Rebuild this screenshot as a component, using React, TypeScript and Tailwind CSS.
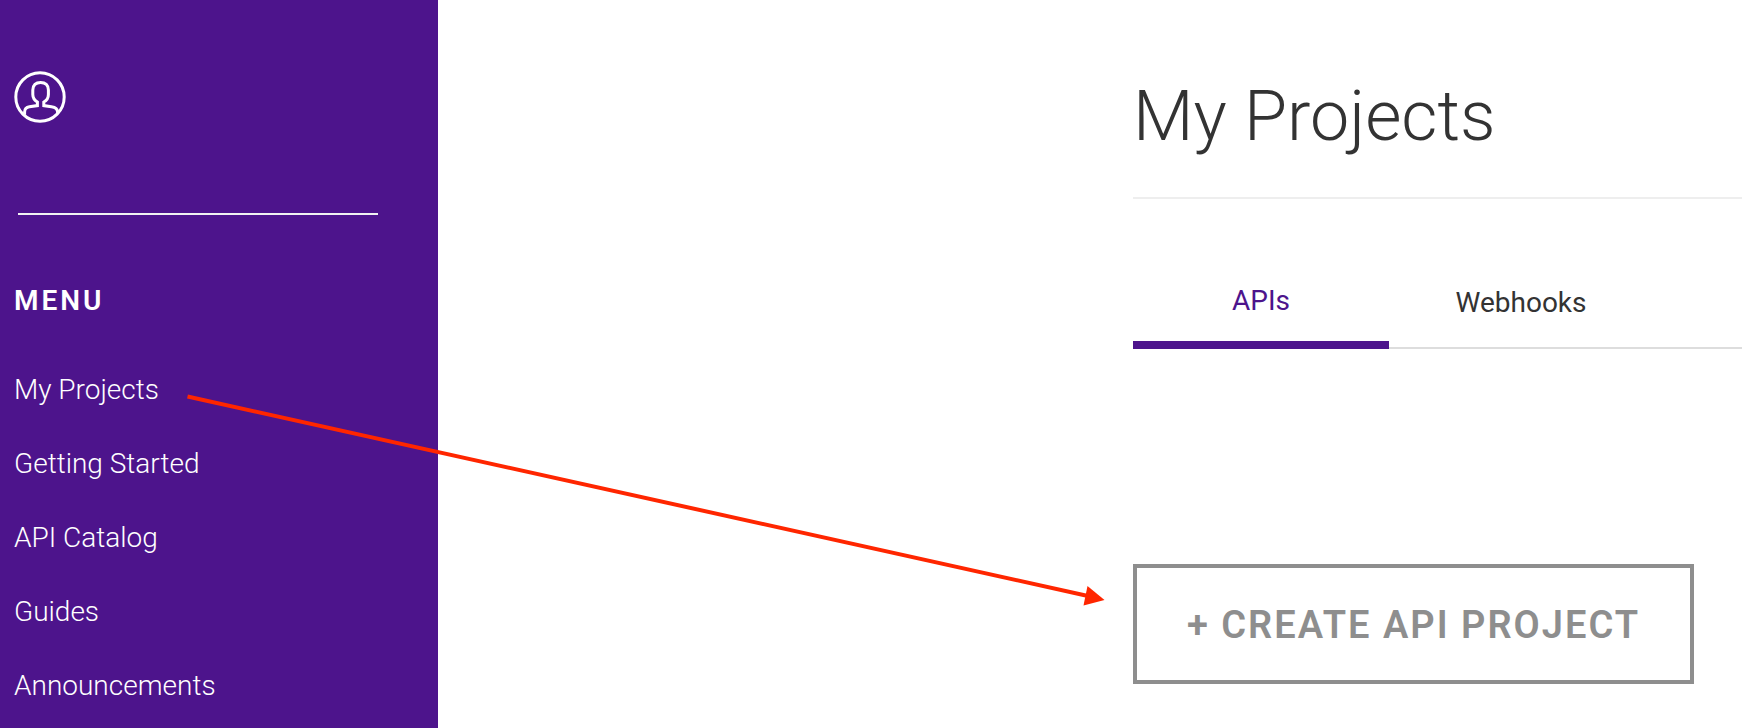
import { useState } from 'react';

const MENU_ITEMS = ['My Projects', 'Getting Started', 'API Catalog', 'Guides', 'Announcements'];

const TABS = [
  { id: 'apis', label: 'APIs', width: 'w-64' },
  { id: 'webhooks', label: 'Webhooks', width: 'w-[264px]' },
];

function UserIcon() {
  return (
    <svg width="52" height="52" viewBox="0 0 52 52" fill="none" stroke="currentColor" strokeWidth="3">
      <circle cx="26" cy="26" r="24.2" />
      <path d="M10.6 43.8v-2.8c0-3.2 1.6-4.8 4.8-5.3l8-1.1v-3.600c-2.600-1.600-4.600-4.200-4.600-7.600v-4.400c0-4.800 3-7.600 7.800-7.600s7.800 2.800 7.800 7.600v4.400c0 3.400-1.800 6-4.600 7.600v3.600l7.600 1.100c4 .6 6.200 2 6.200 5.300v2" />
    </svg>
  );
}

export default function App() {
  const [activeTab, setActiveTab] = useState('apis');

  return (
    <div className="relative flex min-h-screen overflow-hidden bg-white font-['Roboto',sans-serif] text-[#333333]">
      {/* Sidebar */}
      <aside className="w-[438px] shrink-0 bg-[#4d148c] pl-[14px] text-white">
        <a href="#account" aria-label="Account" className="mt-[71px] block w-[52px]">
          <UserIcon />
        </a>
        <hr className="mt-[90px] ml-1 w-[360px] border-t-2 border-[#f2f2f2]" />
        <h2 className="mt-[66px] text-[28px] leading-10 font-semibold tracking-[3px]">MENU</h2>
        <nav className="mt-[32px]">
          <ul>
            {MENU_ITEMS.map((item) => (
              <li key={item}>
                <a href="#menu" className="block text-[28px] leading-[74px] font-light">{item}</a>
              </li>
            ))}
          </ul>
        </nav>
      </aside>

      {/* Content */}
      <main className="min-w-0 flex-1 pl-[695px]">
        <h1 className="mt-[71px] text-[70px] leading-[90px] font-light whitespace-nowrap">My Projects</h1>
        <div className="mt-9 border-t-2 border-[#eeeeee]" />

        <div role="tablist" className="mt-16 flex border-b-2 border-[#dddddd]">
          {TABS.map((tab) => (
            <button
              key={tab.id}
              role="tab"
              aria-selected={activeTab === tab.id}
              onClick={() => setActiveTab(tab.id)}
              className={`${tab.width} -mb-0.5 h-[86px] shrink-0 text-[28px] ${
                activeTab === tab.id
                  ? 'border-b-8 border-[#4d148c] pb-0.5 text-[#4d148c]'
                  : 'border-b-2 border-transparent pb-1'
              }`}
            >
              {tab.label}
            </button>
          ))}
        </div>

        <button className="mt-[215px] h-[120px] w-[561px] border-4 border-[#8e8e8e] pt-0.5 text-[38px] font-semibold tracking-[2px] whitespace-nowrap text-[#8e8e8e]">
          + CREATE API PROJECT
        </button>
      </main>

      {/* Arrow from the menu item to the create button */}
      <svg
        className="pointer-events-none absolute top-[390px] left-[180px]"
        width="930"
        height="220"
        viewBox="180 390 930 220"
        aria-hidden="true"
      >
        <path d="M187.500 396.500L1088 596" stroke="#ff2600" strokeWidth="4" />
        <path d="M1104.500 600L1087.500 586L1083.500 605.500Z" fill="#ff2600" />
      </svg>
    </div>
  );
}
